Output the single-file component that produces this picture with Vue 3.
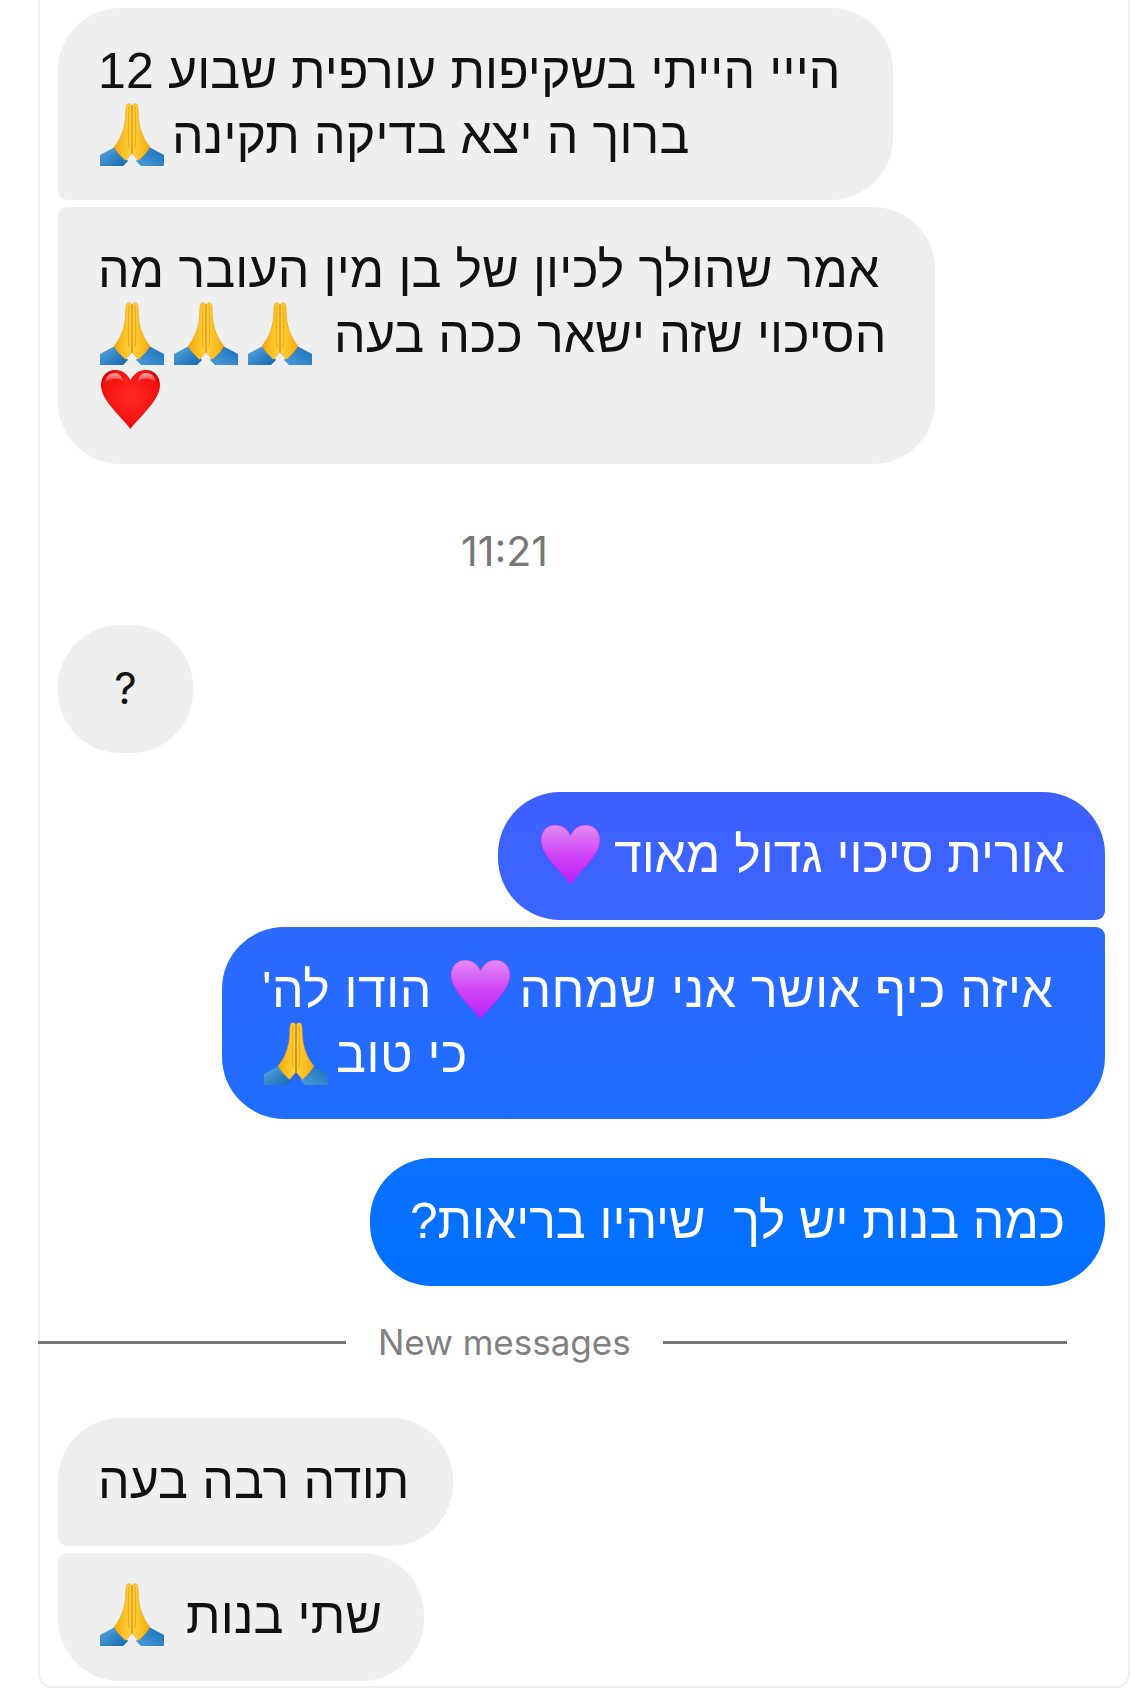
<template>
  <div class="page">
    <svg class="defs" aria-hidden="true">
      <defs>
        <linearGradient id="sleeve" x1="0" y1="0" x2="1" y2="1">
          <stop offset="0" stop-color="#5aa9e0" />
          <stop offset="1" stop-color="#1166ae" />
        </linearGradient>
        <linearGradient id="sleeve-r" x1="1" y1="0" x2="0" y2="1">
          <stop offset="0" stop-color="#1a70b8" />
          <stop offset="1" stop-color="#4a9cdb" />
        </linearGradient>
        <linearGradient id="palm" x1="0" y1="0" x2="1" y2="0">
          <stop offset="0" stop-color="#f5a90c" />
          <stop offset="1" stop-color="#ffd23a" />
        </linearGradient>
        <linearGradient id="palm-r" x1="0" y1="0" x2="1" y2="0">
          <stop offset="0" stop-color="#ffd23a" />
          <stop offset="1" stop-color="#f5a90c" />
        </linearGradient>
        <radialGradient id="red" cx="0.5" cy="0.45" r="0.6">
          <stop offset="0" stop-color="#ff2a22" />
          <stop offset="0.8" stop-color="#f3100f" />
          <stop offset="1" stop-color="#c90008" />
        </radialGradient>
        <linearGradient id="violet" x1="0" y1="0" x2="0" y2="1">
          <stop offset="0" stop-color="#e58cf6" />
          <stop offset="0.5" stop-color="#cf45f5" />
          <stop offset="1" stop-color="#bb22fa" />
        </linearGradient>
        <linearGradient id="shine" x1="0" y1="0" x2="0" y2="1">
          <stop offset="0" stop-color="#fff" stop-opacity="0.65" />
          <stop offset="1" stop-color="#fff" stop-opacity="0" />
        </linearGradient>
      </defs>
      <symbol id="pray" viewBox="0 0 64 63">
        <path d="M0 52 15 44 28 58 23 63H0Z" fill="url(#sleeve)" />
        <path d="M64 52 49 44 36 58 41 63H64Z" fill="url(#sleeve-r)" />
        <path d="M31.6 3C31 .5 28 0 27 1.500 25.500 4 25.800 10 25.500 15 24.500 27 20 37 14 44L18 50 25.500 57.500 31.600 50.500Z" fill="url(#palm)" stroke="#e8980a" stroke-width="0.5" />
        <path d="M32.400 3C33 .5 36 0 37 1.500 38.500 4 38.200 10 38.500 15 39.500 27 44 37 50 44L46 50 38.500 57.500 32.400 50.500Z" fill="url(#palm-r)" stroke="#e8980a" stroke-width="0.5" />
        <path d="M29 3C28.500 15 28 30 29 45M35 3C35.500 15 36 30 35 45" stroke="#ef9c0a" stroke-width="0.8" fill="none" />
        <path d="M32 2V51" stroke="#d98505" stroke-width="0.8" />
      </symbol>
      <symbol id="heart-red" viewBox="0 0 60 60">
        <path d="M30 59C22 48 2 32 1 17 .5 7 7 1 15 1 22 1 27 5 30 11 33 5 38 1 45 1 53 1 59.500 7 59 17 58 32 38 48 30 59Z" fill="url(#red)" />
        <path d="M15 4C9 4 5 8 5 14 9 9 17 8 23 12 21 7 19 4 15 4ZM45 4C41 4 38 7 37 12 43 8 51 9 55 14 55 8 51 4 45 4Z" fill="url(#shine)" />
      </symbol>
      <symbol id="heart-violet" viewBox="0 0 60 60">
        <path d="M30 59C22 48 2 32 1 17 .5 7 7 1 15 1 22 1 27 5 30 11 33 5 38 1 45 1 53 1 59.500 7 59 17 58 32 38 48 30 59Z" fill="url(#violet)" stroke="#b92cf0" stroke-opacity="0.5" />
      </symbol>
    </svg>

    <div class="card">
      <div class="bubble in first w-835">
        <div>הייי הייתי בשקיפות עורפית שבוע 12</div>
        <div>ברוך ה יצא בדיקה תקינה<svg class="emoji"><use href="#pray" /></svg></div>
      </div>
      <div class="bubble in last near w-877">
        <div>אמר שהולך לכיון של בן מין העובר מה</div>
        <div>הסיכוי שזה ישאר ככה בעה <svg class="emoji"><use href="#pray" /></svg><svg class="emoji"><use href="#pray" /></svg><svg class="emoji"><use href="#pray" /></svg></div>
        <div><svg class="emoji heart"><use href="#heart-red" /></svg></div>
      </div>

      <div class="time">11:21</div>

      <div class="bubble in question">?</div>

      <div class="bubble out first tone-a">
        <div>אורית סיכוי גדול מאוד<svg class="emoji heart"><use href="#heart-violet" /></svg></div>
      </div>
      <div class="bubble out last near tone-b">
        <div>איזה כיף אושר אני שמחה<svg class="emoji heart"><use href="#heart-violet" /></svg> הודו לה'</div>
        <div>כי טוב<svg class="emoji"><use href="#pray" /></svg></div>
      </div>
      <div class="bubble out tone-c spaced">
        <div>כמה בנות יש לך &nbsp;שיהיו בריאות?</div>
      </div>

      <div class="divider">
        <span class="line left"></span>
        <span class="label">New messages</span>
        <span class="line right"></span>
      </div>

      <div class="bubble in first w-395">
        <div>תודה רבה בעה</div>
      </div>
      <div class="bubble in last near w-366">
        <div>שתי בנות <svg class="emoji"><use href="#pray" /></svg></div>
      </div>
    </div>
  </div>
</template>

<script setup>
</script>

<style>
html,
body {
  background: #fff;
}
</style>

<style scoped>
.page {
  width: 1135px;
  height: 1694px;
  overflow: hidden;
}

.defs {
  position: absolute;
  width: 0;
  height: 0;
}

.card {
  display: flex;
  flex-direction: column;
  align-items: flex-start;
  box-sizing: border-box;
  width: 1092px;
  height: 1688px;
  margin-left: 38px;
  padding: 8px 23px 0 18px;
  border: 2px solid #efefef;
  border-top: 0;
  border-radius: 0 0 14px 14px;
}

.bubble {
  direction: rtl;
  text-align: left;
  box-sizing: border-box;
  min-height: 128px;
  padding: 31px 40px;
  border-radius: 62px;
  font-family: "Liberation Sans", sans-serif;
  font-size: 50px;
  line-height: 65px;
  letter-spacing: 0.15px;
  white-space: nowrap;
}

.w-835 {
  width: 835px;
}

.w-877 {
  width: 877px;
}

.w-395 {
  width: 395px;
}

.w-366 {
  width: 366px;
}

.in {
  background: #efefef;
  color: #111;
}

.out {
  align-self: flex-end;
  color: #fff;
}

.in.first {
  border-bottom-left-radius: 9px;
}

.in.last {
  border-top-left-radius: 9px;
}

.out.first {
  border-bottom-right-radius: 9px;
}

.out.last {
  border-top-right-radius: 9px;
}

.near {
  margin-top: 7px;
}

.tone-a {
  margin-top: 39px;
  letter-spacing: 0;
  background: linear-gradient(#3e60ff, #3a65ff);
}

.tone-b {
  width: 883px;
  letter-spacing: 0.5px;
  background: linear-gradient(#2d69ff, #1e6dff);
}

.tone-c {
  letter-spacing: -0.05px;
  background: linear-gradient(#0a70ff, #0070ff);
}

.spaced {
  margin-top: 39px;
}

.emoji {
  display: inline-block;
  width: 64px;
  height: 63px;
  margin: -10px 8px -10px 2px;
  vertical-align: -3px;
}

.emoji.heart {
  width: 61px;
  height: 61px;
  margin-right: 13px;
  vertical-align: -3px;
}

.tone-b .emoji.heart {
  margin-left: 4px;
  margin-right: 8px;
}

.question {
  width: 135px;
  height: 128px;
  padding: 31px 0;
  direction: ltr;
  text-align: center;
  font-family: Inter, sans-serif;
  font-size: 44px;
}

.time {
  box-sizing: border-box;
  width: 893px;
  margin: 59px 0 46px;
  font-family: Inter, sans-serif;
  font-size: 41px;
  line-height: 56px;
  text-align: center;
  color: #777;
}

.divider {
  display: flex;
  align-items: center;
  gap: 32px;
  width: 1029px;
  height: 40px;
  margin: 36px 0 0 -20px;
  font-family: Inter, sans-serif;
  font-size: 35px;
  color: #808080;
}

.line {
  height: 3px;
  background: #777;
}

.line.left {
  width: 308px;
}

.line.right {
  flex: 1;
}

.divider + .bubble {
  margin-top: 56px;
}
</style>
